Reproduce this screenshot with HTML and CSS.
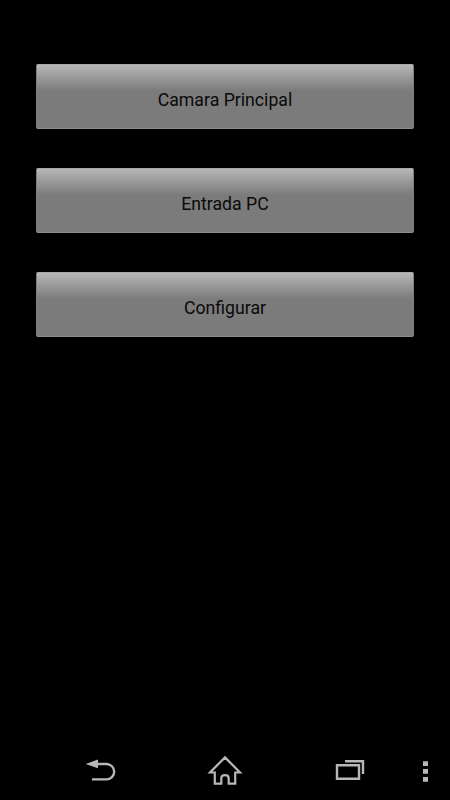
FILE: index.html
```html
<!DOCTYPE html>
<html lang="es">
<head>
<meta charset="utf-8">
<title>Camaras</title>
<link rel="stylesheet" href="styles.css">
</head>
<body>
<main class="menu">
  <button class="item">Camara Principal</button>
  <button class="item">Entrada PC</button>
  <button class="item">Configurar</button>
</main>
<nav class="navbar">
  <svg class="back" width="50" height="40" viewBox="0 0 50 40"><path d="M10.7 14 23 9.5V18.3Z" fill="#b8b8b8"/><path d="M21 14H31.5A7.7 7.7 0 0 1 31.5 29.4H17" fill="none" stroke="#b8b8b8" stroke-width="2.4"/></svg>
  <svg class="home" width="50" height="40" viewBox="0 0 50 40"><path d="M25 7.4 40 22.5H35.2V33.6H28.7V28.5C28.7 24 21.3 24 21.3 28.5V33.6H14.8V22.5H10Z" fill="none" stroke="#b8b8b8" stroke-width="2.2"/></svg>
  <svg class="recent" width="50" height="40" viewBox="0 0 50 40"><path d="M12 15.3H34V28.7H12ZM20 11.3H38V24" fill="none" stroke="#b8b8b8" stroke-width="2.4"/></svg>
  <svg class="more" width="45" height="40" viewBox="0 0 45 40"><path d="M18 11.3H23V16H18ZM18 19H23V23.7H18ZM18 27H23V31.7H18Z" fill="#b8b8b8"/></svg>
</nav>
</body>
</html>
```

FILE: styles.css
```css
* { box-sizing: border-box; }
body {
  margin: 0;
  height: 800px;
  display: flex;
  flex-direction: column;
  justify-content: space-between;
  background: #000;
  font-family: Roboto, "Liberation Sans", sans-serif;
}
.menu {
  display: flex;
  flex-direction: column;
  gap: 39px;
  padding: 64px 36px 0;
}
.item {
  height: 65px;
  padding: 7px 0 0;
  border: 1px solid #808080;
  border-top-color: #aaa;
  border-bottom-color: #8c8c8c;
  border-radius: 2px;
  background: linear-gradient(#b7b7b7 0, #989898 13px, #7b7b7b 26px, #7b7b7b 100%);
  color: #0a0a0a;
  font-family: inherit;
  font-size: 17.7px;
  font-weight: 400;
  line-height: 22px;
}
.navbar {
  display: flex;
  height: 50px;
}
.back { margin-left: 75px; }
.home, .recent { margin-left: 75px; }
.more { margin-left: 30px; }
```
